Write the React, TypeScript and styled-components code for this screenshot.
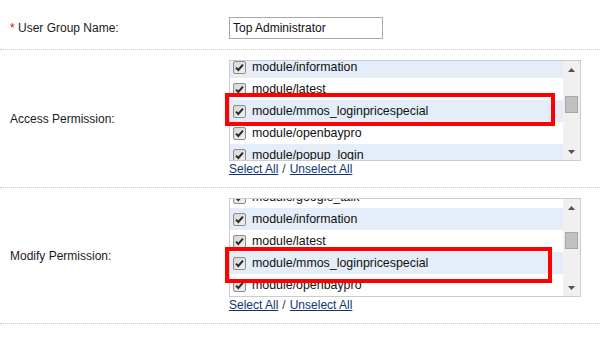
import styled, { createGlobalStyle } from "styled-components";

const GlobalStyle = createGlobalStyle`
  html, body {
    margin: 0;
    padding: 0;
    background: #ffffff;
  }
  body {
    font-family: "Liberation Sans", Arial, sans-serif;
    font-size: 12px;
    color: #111;
  }
`;

// only the rows that show in the scrolled boxes
const accessModules = [
  "module/information",
  "module/latest",
  "module/mmos_loginpricespecial",
  "module/openbaypro",
  "module/popup_login",
];

const modifyModules = [
  "module/google_talk",
  "module/information",
  "module/latest",
  "module/mmos_loginpricespecial",
  "module/openbaypro",
];

const Checkbox = () => (
  <svg width="13" height="13" viewBox="0 0 13 13">
    <defs>
      <linearGradient id="cbfill" x1="0" y1="0" x2="1" y2="1">
        <stop offset="0" stopColor="#d4d4d4" />
        <stop offset="1" stopColor="#f2f2f2" />
      </linearGradient>
    </defs>
    <rect x="0.5" y="0.5" width="12" height="12" rx="1.5" fill="url(#cbfill)" stroke="#8e8e8e" />
    <path d="M3 6.6 L5.3 9 L10 3.6" fill="none" stroke="#2b2b2b" strokeWidth="2" />
  </svg>
);

const Arrow = ({ down }: { down?: boolean }) => (
  <svg width="7" height="4" viewBox="0 0 7 4">
    <path d={down ? "M0 0 H7 L3.5 4 Z" : "M0 4 H7 L3.5 0 Z"} fill="#505050" />
  </svg>
);

type PermissionProps = {
  label: string;
  items: string[];
  offset: number;
  thumbTop: number;
  height: number;
  mark: { top: number; width: number; height: number };
  blueFirst: boolean;
};

const Permission = ({ label, items, offset, thumbTop, height, mark, blueFirst }: PermissionProps) => (
  <Row>
    <Label>{label}</Label>
    <Field>
      <BoxWrap>
        <ScrollBox $height={height}>
          <Viewport>
            <List style={{ marginTop: offset }}>
              {items.map((item, i) => (
                <Item key={item} $blue={(i % 2 === 0) === blueFirst}>
                  <Checkbox />
                  <span>{item}</span>
                </Item>
              ))}
            </List>
          </Viewport>
          <ScrollBar>
            <ArrowButton>
              <Arrow />
            </ArrowButton>
            <Track>
              <Thumb style={{ marginTop: thumbTop }} />
            </Track>
            <ArrowButton>
              <Arrow down />
            </ArrowButton>
          </ScrollBar>
        </ScrollBox>
        <Highlight style={{ top: mark.top, width: mark.width, height: mark.height }} />
      </BoxWrap>
      <Links>
        <Link href="#">Select All</Link>
        <Sep>/</Sep>
        <Link href="#">Unselect All</Link>
      </Links>
    </Field>
  </Row>
);

export default function App() {
  return (
    <>
      <GlobalStyle />
      <Form>
        <Row>
          <Label>
            <Required>*</Required> User Group Name:
          </Label>
          <Field>
            <TextInput defaultValue="Top Administrator" />
          </Field>
        </Row>
        <Permission
          label="Access Permission:"
          items={accessModules}
          offset={-5}
          thumbTop={18}
          height={101}
          mark={{ top: 33, width: 330, height: 33 }}
          blueFirst={true}
        />
        <Permission
          label="Modify Permission:"
          items={modifyModules}
          offset={-13}
          thumbTop={16}
          height={99}
          mark={{ top: 49, width: 327, height: 36 }}
          blueFirst={false}
        />
      </Form>
    </>
  );
}

const Form = styled.div`
  width: 600px;
  padding-top: 7px;
`;

const Row = styled.div`
  display: grid;
  grid-template-columns: 219px 1fr;
  align-items: center;
  padding: 10px 0 10px 10px;
  border-bottom: 1px dotted #c8c8c8;
`;

const Label = styled.div`
  color: #1a1a1a;
  font-size: 12px;
`;

const Required = styled.span`
  color: #f00;
`;

const Field = styled.div`
  display: flex;
  flex-direction: column;
  align-items: flex-start;
`;

const TextInput = styled.input`
  box-sizing: border-box;
  width: 154px;
  height: 22px;
  padding: 1px 3px;
  border: 1px solid #a9a9a9;
  font-family: "Liberation Sans", Arial, sans-serif;
  font-size: 12px;
  color: #111;
  outline: none;
`;

const BoxWrap = styled.div`
  position: relative;
`;

const ScrollBox = styled.div<{ $height: number }>`
  box-sizing: border-box;
  width: 352px;
  height: ${(p) => p.$height}px;
  border: 1px solid #cccccc;
  display: flex;
  background: #fff;
`;

const Viewport = styled.div`
  flex: 1;
  overflow: hidden;
`;

const List = styled.div`
  display: flex;
  flex-direction: column;
`;

const Item = styled.div<{ $blue: boolean }>`
  height: 22px;
  display: flex;
  align-items: center;
  gap: 6px;
  padding-left: 3px;
  background: ${(p) => (p.$blue ? "#e4edf8" : "#ffffff")};
  color: #111;
  font-size: 12.4px;
  white-space: nowrap;

  svg {
    flex: none;
  }
`;

const ScrollBar = styled.div`
  width: 17px;
  display: flex;
  flex-direction: column;
  background: #f0f0f0;
`;

const ArrowButton = styled.div`
  height: 17px;
  display: flex;
  align-items: center;
  justify-content: center;
  flex: none;
`;

const Track = styled.div`
  flex: 1;
  display: flex;
  justify-content: center;
`;

const Thumb = styled.div`
  box-sizing: border-box;
  width: 13px;
  height: 17px;
  background: #c1c1c1;
  border: 1px solid #a8a8a8;
`;

const Highlight = styled.div`
  position: absolute;
  left: -4px;
  box-sizing: border-box;
  border: 4px solid #ff0000;
  pointer-events: none;
`;

const Links = styled.div`
  display: flex;
  gap: 4px;
  line-height: 16px;
  font-size: 12px;
  color: #333;
`;

const Sep = styled.span`
  color: #333;
`;

const Link = styled.a`
  color: #0f3570;
  text-decoration: underline;
`;
